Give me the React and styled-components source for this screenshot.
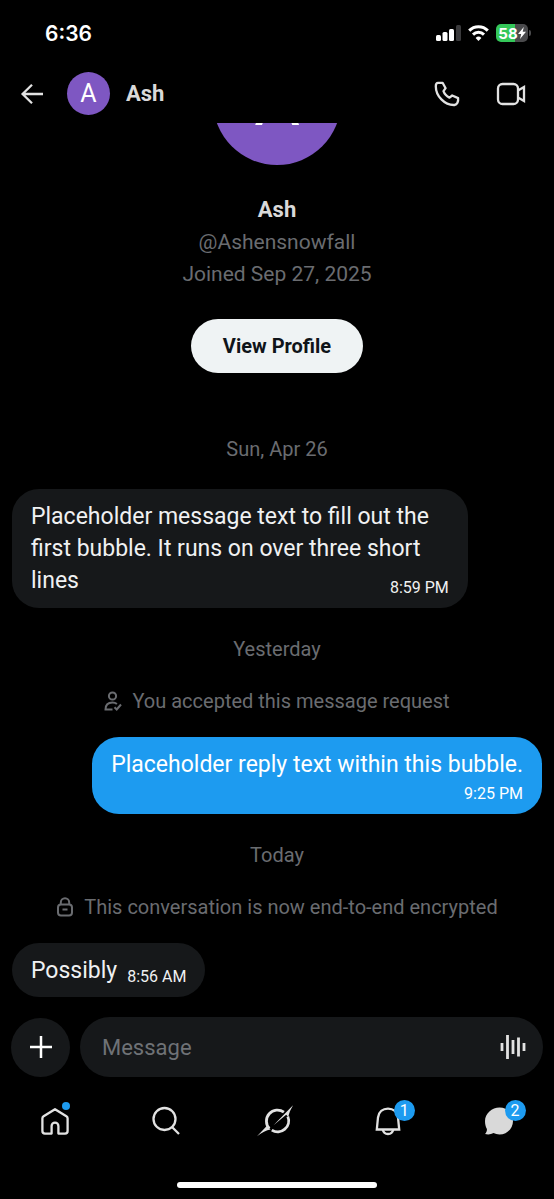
import React from "react";
import styled, { createGlobalStyle } from "styled-components";

const GlobalStyle = createGlobalStyle`
  * { box-sizing: border-box; }
  html, body { margin: 0; background: #000; }
  body { font-family: Roboto, "Liberation Sans", sans-serif; color: #e7e9ea; }
  button, input { font: inherit; color: inherit; border: 0; }
  button { padding: 0; background: none; cursor: pointer; }
  svg { display: block; flex: none; }
`;

const Screen = styled.div`
  display: flex;
  flex-direction: column;
  min-height: 100vh;
  background: #000;
`;

const StatusBar = styled.div`
  display: flex;
  align-items: center;
  justify-content: space-between;
  height: 64px;
  padding: 2px 23px 0 45px;
  font-family: Inter, sans-serif;
  font-size: 21px;
  font-weight: 600;
  color: #fff;
`;

const StatusIcons = styled.div`
  display: flex;
  align-items: center;
  gap: 7px;
`;

const Battery = styled.div`
  display: flex;
  align-items: center;
  gap: 1px;
`;

const BatteryBody = styled.div`
  display: flex;
  align-items: center;
  justify-content: center;
  width: 32px;
  height: 18px;
  border-radius: 5px;
  background: linear-gradient(90deg, #34c759 58%, #4a4a4c 58%);
  font-size: 15px;
  font-weight: 700;
`;

const BatteryTip = styled.div`
  width: 2px;
  height: 6px;
  border-radius: 0 2px 2px 0;
  background: #4a4a4c;
`;

const Header = styled.header`
  display: flex;
  align-items: center;
  height: 59px;
  padding: 0 28px 0 20px;
`;

const Avatar = styled.div`
  display: flex;
  align-items: center;
  justify-content: center;
  flex: none;
  width: ${(p) => p.$size}px;
  height: ${(p) => p.$size}px;
  border-radius: 50%;
  background: #7e57c2;
  color: #fff;
  font-size: ${(p) => p.$font}px;
`;

const HeaderName = styled.h1`
  flex: 1;
  margin: 0 0 0 16px;
  font-size: 22px;
  font-weight: 700;
  color: #d9d9d9;
`;

const IconButton = styled.button`
  display: flex;
  align-items: center;
  color: #e2e2e2;
`;

const BackButton = styled(IconButton)`
  margin-right: 23px;
`;

const HeaderActions = styled.div`
  display: flex;
  align-items: center;
  gap: 36px;
`;

const Thread = styled.main`
  display: flex;
  flex-direction: column;
  flex: 1;
  overflow: hidden;
  padding: 0 12px 20px;
`;

const Profile = styled.section`
  display: flex;
  flex-direction: column;
  align-items: center;
  margin: -86px 0 35px;
`;

const ProfileName = styled.h2`
  margin: 29px 0 0;
  font-size: 22px;
  line-height: 32px;
  font-weight: 700;
  color: #d9d9d9;
`;

const ProfileMeta = styled.p`
  margin: 0;
  font-size: 21px;
  line-height: 32px;
  color: #6a6c70;
`;

const ProfileButton = styled.button`
  && {
    height: 54px;
    margin-top: 29px;
    padding: 0 32px;
    border-radius: 27px;
    background: #eff3f4;
    color: #0f1419;
    font-size: 20px;
    font-weight: 700;
  }
`;

const DateLabel = styled.div`
  margin: 29px 0 28px;
  font-size: 20px;
  line-height: 24px;
  text-align: center;
  color: #6a6c70;
`;

const Notice = styled.div`
  display: flex;
  align-items: center;
  justify-content: center;
  gap: 10px;
  margin-bottom: 24px;
  font-size: 20px;
  line-height: 24px;
  color: #6a6c70;
`;

const Bubble = styled.article`
  display: ${(p) => (p.$inline ? "flex" : "block")};
  align-items: flex-end;
  gap: 10px;
  align-self: ${(p) => (p.$own ? "flex-end" : "flex-start")};
  max-width: 86%;
  padding: 12px 19px 10px;
  border-radius: 27px;
  background: ${(p) => (p.$own ? "#1d9bf0" : "#16181a")};
  color: ${(p) => (p.$own ? "#fff" : "#f0f1f2")};
`;

const BubbleText = styled.p`
  margin: 0;
  font-size: 23px;
  line-height: 32px;
`;

const BubbleTime = styled.time`
  display: block;
  margin-top: ${(p) => p.$offset}px;
  font-size: 16px;
  line-height: 20px;
  text-align: right;
  white-space: nowrap;
`;

const Composer = styled.form`
  display: flex;
  align-items: center;
  gap: 10px;
  padding: 0 11px;
`;

const AddButton = styled.button`
  && {
    display: flex;
    align-items: center;
    justify-content: center;
    flex: none;
    width: 59px;
    height: 59px;
    border-radius: 50%;
    background: #16181a;
    color: #fff;
  }
`;

const Field = styled.div`
  display: flex;
  align-items: center;
  flex: 1;
  min-width: 0;
  height: 60px;
  padding: 0 17px 0 22px;
  border-radius: 30px;
  background: #16181a;
`;

const MessageInput = styled.input`
  flex: 1;
  min-width: 0;
  padding: 0;
  background: transparent;
  outline: none;
  && { font-size: 22px; }
  &::placeholder { color: #6f7276; opacity: 1; }
`;

const TabBar = styled.nav`
  display: grid;
  grid-template-columns: repeat(5, 1fr);
  align-items: center;
  height: 87px;
`;

const Tab = styled.a`
  position: relative;
  justify-self: center;
  color: #e2e2e2;
  text-decoration: none;
`;

const Badge = styled.span`
  position: absolute;
  top: -6px;
  right: -12px;
  width: 21px;
  height: 21px;
  border-radius: 50%;
  background: #1d9bf0;
  color: #fff;
  font-size: 16px;
  line-height: 21px;
  text-align: center;
`;

const Dot = styled.span`
  position: absolute;
  top: -4px;
  right: 0;
  width: 8px;
  height: 8px;
  border-radius: 50%;
  background: #1d9bf0;
`;

const HomeIndicator = styled.div`
  width: 36%;
  height: 6px;
  margin: 18px auto 11px;
  border-radius: 3px;
  background: #fff;
`;

const Icon = ({ w = 30, h = 30, sw = 2, box, children }) => (
  <svg width={w} height={h} viewBox={box || `0 0 ${w} ${h}`} fill="none" stroke="currentColor" strokeWidth={sw} aria-hidden="true">
    {children}
  </svg>
);

const MESSAGES = {
  first: "Placeholder message text to fill out the first bubble. It runs on over three short lines",
  reply: "Placeholder reply text within this bubble.",
  last: "Possibly",
};

function Message({ text, time, own, layout }) {
  const offset = { overlap: -19, below: 3, inline: 0 }[layout];
  return (
    <Bubble $own={own} $inline={layout === "inline"}>
      <BubbleText>{text}</BubbleText>
      <BubbleTime $offset={offset}>{time}</BubbleTime>
    </Bubble>
  );
}

export default function App() {
  return (
    <Screen>
      <GlobalStyle />
      <StatusBar>
        <span>6:36</span>
        <StatusIcons>
          <svg width="25" height="16" viewBox="0 0 25 16" fill="#fff" aria-hidden="true">
            <rect x="0" y="10" width="5" height="6" rx="1.5" />
            <rect x="6.5" y="7" width="5" height="9" rx="1.5" />
            <rect x="13" y="4" width="5" height="12" rx="1.5" />
            <rect x="20" y="0" width="5" height="16" rx="1.5" fill="#3a3a3c" />
          </svg>
          <svg width="21" height="16" viewBox="0 0 21 16" fill="none" stroke="#fff" strokeWidth="3" aria-hidden="true">
            <path d="M1.2 5.6a13.2 13.2 0 0 1 18.6 0" />
            <path d="M5 9.6a7.8 7.8 0 0 1 11 0" />
            <path d="M10.5 16 7.6 12.9a4.1 4.1 0 0 1 5.8 0Z" fill="#fff" stroke="none" />
          </svg>
          <Battery>
            <BatteryBody>
              58
              <svg width="8" height="12" viewBox="0 0 8 12" fill="#fff" aria-hidden="true">
                <path d="M5.8 0 0 7h3.2L2 12l6-7.2H4.7Z" />
              </svg>
            </BatteryBody>
            <BatteryTip />
          </Battery>
        </StatusIcons>
      </StatusBar>

      <Header>
        <BackButton aria-label="Back">
          <Icon w={24} h={22} sw={2.3}><path d="M12 1.8 2.6 11 12 20.2M2.6 11H23" /></Icon>
        </BackButton>
        <Avatar $size={43} $font={25}>A</Avatar>
        <HeaderName>Ash</HeaderName>
        <HeaderActions>
          <IconButton aria-label="Voice call">
            <Icon w={26} h={26} sw={2.3}>
              <path d="M4 1.800h4.600l3 5.400-2.100 2.900c.9 2.800 3 5 6 6.500l2.700-2.100 5.900 2.600c.4 3.600-.9 6.600-3.600 6.900C10.500 24.400 1.800 15 1.800 5.200c0-1.900.7-3.400 2.200-3.400Z" strokeLinejoin="round" />
            </Icon>
          </IconButton>
          <IconButton aria-label="Video call">
            <Icon w={30} h={24} sw={2.3}>
              <rect x="2" y="2" width="20" height="20" rx="4.5" />
              <path d="M22 8.500 28 5v14l-6-3.500" />
            </Icon>
          </IconButton>
        </HeaderActions>
      </Header>

      <Thread>
        <Profile>
          <Avatar $size={128} $font={70}>A</Avatar>
          <ProfileName>Ash</ProfileName>
          <ProfileMeta>@Ashensnowfall</ProfileMeta>
          <ProfileMeta>Joined Sep 27, 2025</ProfileMeta>
          <ProfileButton>View Profile</ProfileButton>
        </Profile>

        <DateLabel>Sun, Apr 26</DateLabel>
        <Message text={MESSAGES.first} time="8:59 PM" layout="overlap" />

        <DateLabel>Yesterday</DateLabel>
        <Notice>
          <Icon w={18} h={20}>
            <circle cx="8.5" cy="5" r="3.6" />
            <path d="M8.5 18.5H1.5c0-4.5 2.8-7 7-7 1.800 0 3.300.5 4.400 1.400M10.500 16.300l2.200 2.200 4.300-5" />
          </Icon>
          You accepted this message request
        </Notice>
        <Message own text={MESSAGES.reply} time="9:25 PM" layout="below" />

        <DateLabel>Today</DateLabel>
        <Notice>
          <Icon w={18} h={20}>
            <rect x="2" y="7.500" width="14" height="11" rx="3" />
            <path d="M4.800 7.500V5.500a4.200 4.200 0 0 1 8.400 0v2M6.500 12.500h5" />
          </Icon>
          This conversation is now end-to-end encrypted
        </Notice>
        <Message text={MESSAGES.last} time="8:56 AM" layout="inline" />
      </Thread>

      <Composer onSubmit={(e) => e.preventDefault()}>
        <AddButton type="button" aria-label="Add attachment">
          <Icon w={22} h={22} sw={2.500}><path d="M11 0v22M0 11h22" /></Icon>
        </AddButton>
        <Field>
          <MessageInput type="text" placeholder="Message" aria-label="Message" />
          <IconButton type="button" aria-label="Record voice message">
            <Icon w={26} h={26} sw={2.800}>
              <path d="M2 9v8M7.500 1v24M13 6v14M18.500 3.500v19M24 9v8" />
            </Icon>
          </IconButton>
        </Field>
      </Composer>

      <TabBar aria-label="Main">
        <Tab href="#home" aria-label="Home">
          <Icon w={30} h={30} sw={2.300}>
            <path d="M15 3.200 3.600 10.300c-.8.5-1.200 1.100-1.200 2V25c0 1.600 1 2.600 2.600 2.600h6.600V20a3.400 3.400 0 0 1 6.800 0v7.600H25c1.600 0 2.600-1 2.600-2.600V12.300c0-.9-.4-1.500-1.200-2Z" strokeLinejoin="round" />
          </Icon>
          <Dot />
        </Tab>
        <Tab href="#search" aria-label="Search">
          <Icon w={30} h={30} sw={2.300}>
            <circle cx="13.500" cy="13" r="11" />
            <path d="m21 21 7 7" />
          </Icon>
        </Tab>
        <Tab href="#grok" aria-label="Grok">
          <Icon w={40} h={34} sw={2.800} box="2 5 40 34">
            <path d="M14.300 29.500a11 11 0 0 1 14.600-16.300" />
            <path d="M32.800 17.500a11 11 0 0 1-16 13.600" />
            <path d="M18.500 26.300 38 6.300c-1.200 2.600-3 5-3.800 8.300l-1 3.400-2-2.200Z" fill="currentColor" stroke="none" />
            <path d="M1.800 37.500 12 26.800l3.600 3.600c-4.200.7-9 3.100-13.800 7.100Z" fill="currentColor" stroke="none" />
          </Icon>
        </Tab>
        <Tab href="#notifications" aria-label="Notifications, 1 new">
          <Icon w={30} h={30} sw={2.300}>
            <path d="M3.800 23.500 5 11.500C5.700 6 9.700 2.600 15 2.600S24.300 6 25 11.500l1.200 12Z" />
            <path d="M9.700 23.500c.7 3 2.700 4.500 5.300 4.500s4.600-1.500 5.300-4.500" />
          </Icon>
          <Badge>1</Badge>
        </Tab>
        <Tab href="#messages" aria-label="Messages, 2 new">
          <svg width="30" height="30" viewBox="0 0 30 30" fill="#d9d9d9" aria-hidden="true">
            <path d="M15.500 1.500C23 1.500 29 7.500 29 15s-6 13.500-13.500 13.500c-2.200 0-4.200-.5-6-1.400-2.500 1.400-5.500 1.800-8.500.9 1.500-1.500 2-3.300 1.900-5C1.600 20.700 1 18 1 15 1 7.500 8 1.500 15.500 1.500Z" />
          </svg>
          <Badge>2</Badge>
        </Tab>
      </TabBar>
      <HomeIndicator />
    </Screen>
  );
}
